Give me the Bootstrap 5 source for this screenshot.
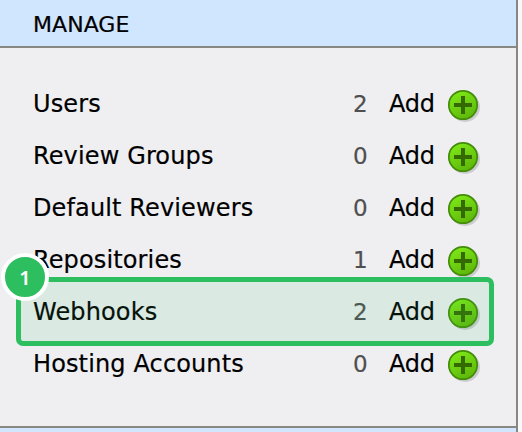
<!DOCTYPE html>
<html lang="en">
<head>
<meta charset="utf-8">
<title>Manage</title>
<link rel="stylesheet" href="https://cdn.jsdelivr.net/npm/bootstrap@5.3.0/dist/css/bootstrap.min.css">
<style>
body{background:#f8f8fa;font-family:"DejaVu Sans",Verdana,sans-serif;color:#000;height:432px;overflow:hidden;-webkit-text-stroke:.2px}
.panel{width:518px;height:432px;background:#efeff2;border-right:2px solid #888883}
.panel-title{height:48px;background:#d0e6ff;border-bottom:2px solid #888883;padding-left:33px;font-size:22px;line-height:49px;letter-spacing:.05px}
.manage-list{padding-top:30px;height:378px}
.manage-row{height:52px;padding-left:33px;padding-right:38px;font-size:24px;line-height:52px}
.item-name{letter-spacing:.13px}
.item-count{width:16px;font-size:23px;color:#4f4f4f;margin-right:20px}
.item-add{width:58px;letter-spacing:-.2px}
.add-icon{width:34px;height:34px;margin-right:-3px;margin-top:3px}
.next-title{height:6px;background:#d0e6ff;border-top:2px solid #888883}
.highlight{left:16px;top:277px;width:478px;height:69px;border:5px solid #2dbe60;border-radius:7px;background:rgba(45,190,96,.1)}
.step{left:1px;top:253px;width:48px;height:48px;border:4.5px solid #fff;background:#2dbe60;color:#fff;font:600 20px/41px "Open Sans",sans-serif}
</style>
</head>
<body>
<svg class="position-absolute" width="0" height="0"><defs>
<linearGradient id="green" x1="0" y1="0" x2="0.5" y2="1"><stop offset="0" stop-color="#82ee18"/><stop offset="1" stop-color="#5fba0c"/></linearGradient>
<symbol id="plus" viewBox="0 0 34 34"><circle cx="18" cy="18" r="15" fill="#cacacf"/><circle cx="16" cy="16" r="14.2" fill="url(#green)" stroke="#438c08" stroke-width="1.7"/><path d="M16 7v18M7 16h18" stroke="#356a02" stroke-width="4"/></symbol>
</defs></svg>
<main class="panel position-relative overflow-hidden">
<div class="panel-title"><span>MANAGE</span></div>
<div class="manage-list">
<div class="manage-row d-flex align-items-center"><span class="item-name flex-grow-1">Users</span><span class="item-count">2</span><span class="item-add">Add</span><svg class="add-icon"><use href="#plus"/></svg></div>
<div class="manage-row d-flex align-items-center"><span class="item-name flex-grow-1">Review Groups</span><span class="item-count">0</span><span class="item-add">Add</span><svg class="add-icon"><use href="#plus"/></svg></div>
<div class="manage-row d-flex align-items-center"><span class="item-name flex-grow-1">Default Reviewers</span><span class="item-count">0</span><span class="item-add">Add</span><svg class="add-icon"><use href="#plus"/></svg></div>
<div class="manage-row d-flex align-items-center"><span class="item-name flex-grow-1">Repositories</span><span class="item-count">1</span><span class="item-add">Add</span><svg class="add-icon"><use href="#plus"/></svg></div>
<div class="manage-row d-flex align-items-center"><span class="item-name flex-grow-1">Webhooks</span><span class="item-count">2</span><span class="item-add">Add</span><svg class="add-icon"><use href="#plus"/></svg></div>
<div class="manage-row d-flex align-items-center"><span class="item-name flex-grow-1">Hosting Accounts</span><span class="item-count">0</span><span class="item-add">Add</span><svg class="add-icon"><use href="#plus"/></svg></div>
</div>
<div class="next-title"></div>
<div class="highlight position-absolute"></div>
<div class="step position-absolute rounded-circle text-center">1</div>
</main>
<script src="https://cdn.jsdelivr.net/npm/bootstrap@5.3.0/dist/js/bootstrap.bundle.min.js"></script>
</body>
</html>
